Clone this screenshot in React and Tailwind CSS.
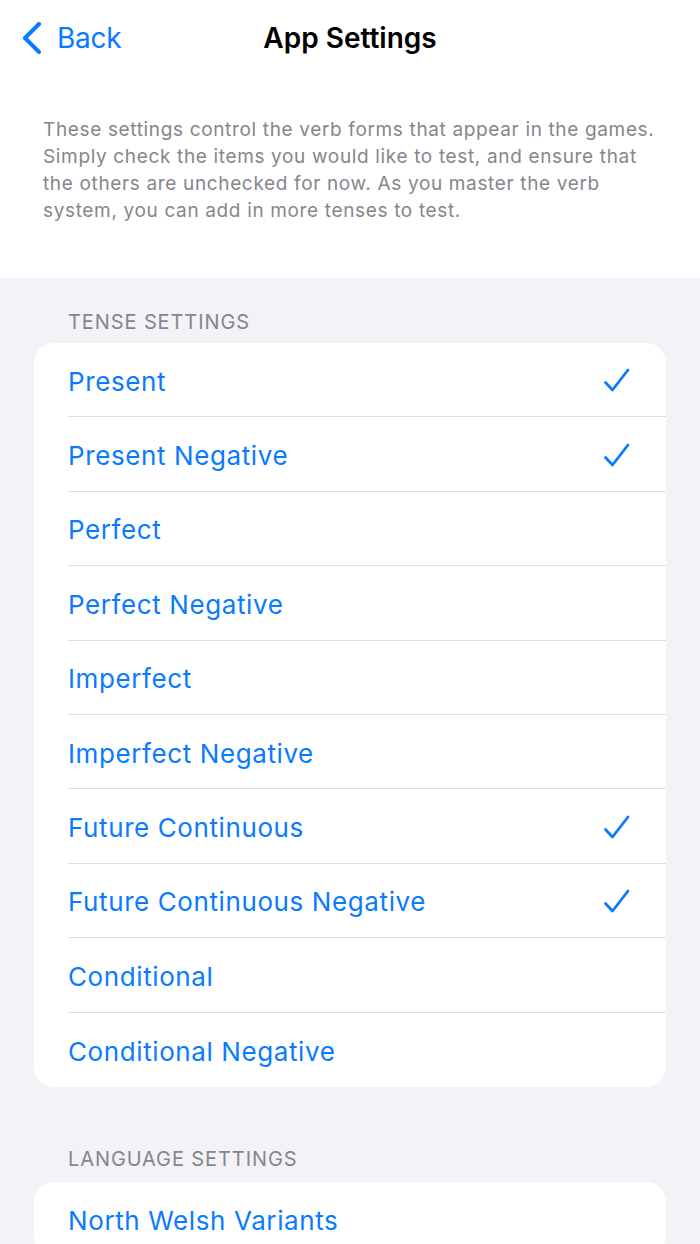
import React from "react";

const tenses = [
  { label: "Present", checked: true },
  { label: "Present Negative", checked: true },
  { label: "Perfect", checked: false },
  { label: "Perfect Negative", checked: false },
  { label: "Imperfect", checked: false },
  { label: "Imperfect Negative", checked: false },
  { label: "Future Continuous", checked: true },
  { label: "Future Continuous Negative", checked: true },
  { label: "Conditional", checked: false },
  { label: "Conditional Negative", checked: false },
];

function Check() {
  return (
    <svg width="28" height="28" viewBox="0 0 28 28" fill="none">
      <path
        d="M2.5 15.5 L9.5 23 L25 3"
        stroke="#0a7aff"
        strokeWidth="2.8"
        strokeLinecap="round"
        strokeLinejoin="round"
      />
    </svg>
  );
}

function Row({ label, checked, last }) {
  return (
    <div className="pl-[34px]">
      <div
        className={
          "flex h-[74.4px] items-center justify-between pr-[35px] pt-[3px] " +
          (last ? "" : "border-b border-[#dcdce0]")
        }
      >
        <span className="text-[26px] text-[#0a7aff] tracking-[0.6px]">{label}</span>
        {checked && <Check />}
      </div>
    </div>
  );
}

function App() {
  return (
    <div
      className="min-h-screen bg-[#f2f2f7]"
      style={{ fontFamily: "Inter, 'Liberation Sans', sans-serif" }}
    >
      {/* Header */}
      <div className="bg-white h-[278px]">
        <div className="relative flex h-[76px] items-center justify-center">
          <div className="absolute left-[20px] top-[22px] flex items-center gap-[13px]">
            <svg width="24" height="32" viewBox="0 0 24 32" fill="none">
              <path
                d="M19 2 L5 16 L19 30"
                stroke="#0a7aff"
                strokeWidth="4"
                strokeLinecap="round"
                strokeLinejoin="round"
              />
            </svg>
            <span className="text-[28px] text-[#0a7aff] tracking-[-0.3px] leading-none">Back</span>
          </div>
          <h1 className="text-[28px] font-semibold text-black tracking-[0px]">App Settings</h1>
        </div>
        <p className="mt-[40px] px-[43px] text-[19px] leading-[27px] text-[#86868b] tracking-[0.65px]">
          These settings control the verb forms that appear in the games.
          Simply check the items you would like to test, and ensure that the
          others are unchecked for now. As you master the verb system, you can
          add in more tenses to test.
        </p>
      </div>

      {/* Tense settings */}
      <div className="px-[34px]">
        <div className="pt-[29px] pb-[6px] pl-[34px] text-[20px] leading-[30px] text-[#86868b] tracking-[0.9px]">
          TENSE SETTINGS
        </div>
        <div className="bg-white rounded-[20px] overflow-hidden">
          {tenses.map((t, i) => (
            <Row key={t.label} label={t.label} checked={t.checked} last={i === tenses.length - 1} />
          ))}
        </div>

        <div className="pt-[57px] pb-[8px] pl-[34px] text-[20px] leading-[30px] text-[#86868b] tracking-[0.9px]">
          LANGUAGE SETTINGS
        </div>
        <div className="bg-white rounded-[20px] overflow-hidden">
          <Row label="North Welsh Variants" checked={false} last />
        </div>
      </div>
    </div>
  );
}

export default App;
